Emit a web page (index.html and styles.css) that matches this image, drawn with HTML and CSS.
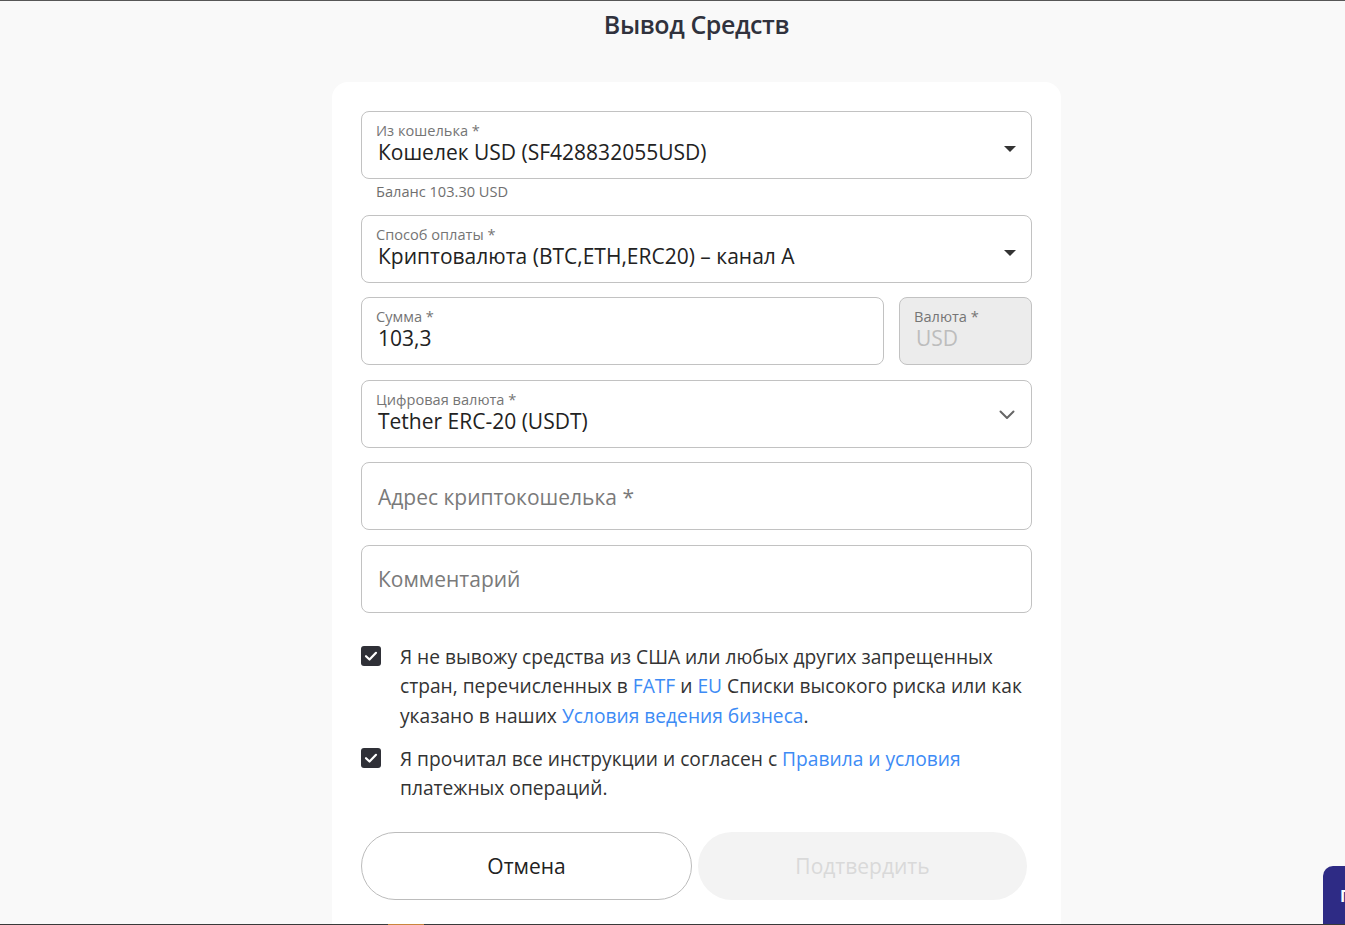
FILE: index.html
```html
<!DOCTYPE html>
<html lang="ru">
<head>
    <meta charset="UTF-8">
    <meta name="viewport" content="width=device-width, initial-scale=1.0">
    <title>Вывод Средств</title>
    <link rel="stylesheet" href="styles.css">
</head>
<body>
    <div class="top-line"></div>

    <div class="page">
        <h1 class="title">Вывод Средств</h1>

        <div class="card">
            <div class="field select">
                <div class="field-body">
                    <div class="field-label">Из кошелька *</div>
                    <div class="field-value">Кошелек USD (SF428832055USD)</div>
                </div>
                <span class="caret"></span>
            </div>
            <div class="helper">Баланс 103.30 USD</div>

            <div class="field select">
                <div class="field-body">
                    <div class="field-label">Способ оплаты *</div>
                    <div class="field-value">Криптовалюта (BTC,ETH,ERC20) – канал A</div>
                </div>
                <span class="caret"></span>
            </div>

            <div class="row">
                <div class="field grow">
                    <div class="field-body">
                        <div class="field-label">Сумма *</div>
                        <div class="field-value">103,3</div>
                    </div>
                </div>
                <div class="field currency disabled">
                    <div class="field-body">
                        <div class="field-label">Валюта *</div>
                        <div class="field-value">USD</div>
                    </div>
                </div>
            </div>

            <div class="field select">
                <div class="field-body">
                    <div class="field-label">Цифровая валюта *</div>
                    <div class="field-value">Tether ERC-20 (USDT)</div>
                </div>
                <svg class="chevron" width="16" height="10" viewBox="0 0 16 10">
                    <path d="M1.5 1.5 L8 8 L14.5 1.5" fill="none" stroke="#666" stroke-width="2" stroke-linecap="round" stroke-linejoin="round"/>
                </svg>
            </div>

            <div class="field empty">
                <div class="placeholder">Адрес криптокошелька *</div>
            </div>

            <div class="field empty">
                <div class="placeholder">Комментарий</div>
            </div>

            <div class="agree">
                <div class="check-row">
                    <span class="checkbox">
                        <svg width="20" height="20" viewBox="0 0 20 20">
                            <path d="M5 10.2 L8.5 13.5 L15 6.8" fill="none" stroke="#fff" stroke-width="2.2" stroke-linecap="round" stroke-linejoin="round"/>
                        </svg>
                    </span>
                    <p>Я не вывожу средства из США или любых других запрещенных стран, перечисленных в <a href="#">FATF</a> и <a href="#">EU</a> Списки высокого риска или как указано в наших <a href="#">Условия ведения бизнеса</a>.</p>
                </div>
                <div class="check-row">
                    <span class="checkbox">
                        <svg width="20" height="20" viewBox="0 0 20 20">
                            <path d="M5 10.2 L8.5 13.5 L15 6.8" fill="none" stroke="#fff" stroke-width="2.2" stroke-linecap="round" stroke-linejoin="round"/>
                        </svg>
                    </span>
                    <p>Я прочитал все инструкции и согласен с <a href="#">Правила и условия</a> платежных операций.</p>
                </div>
            </div>

            <div class="buttons">
                <button class="btn btn-cancel">Отмена</button>
                <button class="btn btn-confirm" disabled>Подтвердить</button>
            </div>
        </div>
    </div>

    <div class="chat-widget"><span>П</span></div>
    <div class="bottom-line"><span class="bottom-mark"></span></div>
</body>
</html>
```

FILE: styles.css
```css
html, body {
    margin: 0;
    padding: 0;
}
body {
    font-family: "Open Sans", "Noto Sans", sans-serif;
    background-color: #f9f9f9;
    color: #333;
    height: 925px;
    overflow: hidden;
}
.top-line {
    height: 1px;
    background: #575757;
}
.page {
    padding-left: 48px;
    display: flex;
    flex-direction: column;
    align-items: center;
}
.title {
    margin: 6px 0 0;
    height: 75px;
    font-size: 25px;
    font-weight: 600;
    letter-spacing: -0.4px;
    color: #30323d;
    line-height: 34px;
}
.card {
    width: 671px;
    background: #fff;
    border-radius: 16px;
    padding: 29px 29px 40px;
    display: flex;
    flex-direction: column;
    gap: 14.5px;
}
.field {
    box-sizing: border-box;
    height: 68px;
    border: 1px solid #c2c2c2;
    border-radius: 8px;
    background: #fff;
    display: flex;
    align-items: center;
    padding: 0 14px;
}
.field-body {
    flex: 1;
    margin-top: -2px;
}
.field-label {
    font-size: 14.6px;
    line-height: 17px;
    color: #757575;
}
.field-value {
    font-size: 21px;
    line-height: 27px;
    color: #222;
    padding-left: 2px;
}
.caret {
    width: 0;
    height: 0;
    border-left: 6px solid transparent;
    border-right: 6px solid transparent;
    border-top: 6px solid #333;
    margin-right: 1px;
    margin-top: 8px;
}
.chevron {
    margin-right: 2px;
    margin-top: 2px;
}
.helper {
    font-size: 14.6px;
    line-height: 18px;
    color: #6f6f6f;
    padding-left: 15px;
    margin-top: -12px;
    margin-bottom: 0.5px;
}
.row {
    display: flex;
    gap: 15px;
}
.grow {
    flex: 1;
}
.currency {
    width: 133px;
}
.disabled {
    background: #ececec;
}
.disabled .field-value {
    color: #bdbdbd;
}
.empty {
    padding-left: 16px;
}
.placeholder {
    font-size: 21px;
    color: #7a7a7a;
    margin-top: 1px;
}
.agree {
    margin-top: 14.5px;
    display: flex;
    flex-direction: column;
    gap: 13.5px;
}
.check-row {
    display: flex;
    align-items: flex-start;
    gap: 19px;
}
.checkbox {
    flex: none;
    width: 20px;
    height: 20px;
    background: #2f3037;
    border-radius: 3px;
    margin-top: 4px;
}
.checkbox svg {
    display: block;
}
.check-row p {
    margin: 0;
    font-size: 19.2px;
    line-height: 29.5px;
    color: #333;
}
.check-row a {
    color: #3d8bf5;
    text-decoration: none;
}
.buttons {
    margin-top: 14.5px;
    display: flex;
    gap: 6px;
    padding-right: 5px;
}
.btn {
    flex: 1;
    height: 68px;
    border-radius: 34px;
    font-family: "Open Sans", "Noto Sans", sans-serif;
    font-size: 21px;
    cursor: pointer;
}
.btn-cancel {
    background: #fff;
    border: 1px solid #bcbcbc;
    color: #222;
}
.btn-confirm {
    background: #f3f3f3;
    border: none;
    color: #d9d9d9;
    cursor: not-allowed;
}
.chat-widget {
    position: fixed;
    left: 1323px;
    top: 866px;
    width: 60px;
    height: 70px;
    background: #2e2b85;
    border-radius: 10px 0 0 0;
    color: #fff;
    font-weight: 700;
    font-size: 16px;
    overflow: hidden;
}
.chat-widget span {
    position: absolute;
    left: 17px;
    top: 19px;
}
.bottom-line {
    position: fixed;
    left: 0;
    right: 0;
    bottom: 0;
    height: 1px;
    background: #3a3a3a;
}
.bottom-mark {
    position: absolute;
    left: 388px;
    width: 36px;
    height: 1px;
    background: #c9853c;
}
```
